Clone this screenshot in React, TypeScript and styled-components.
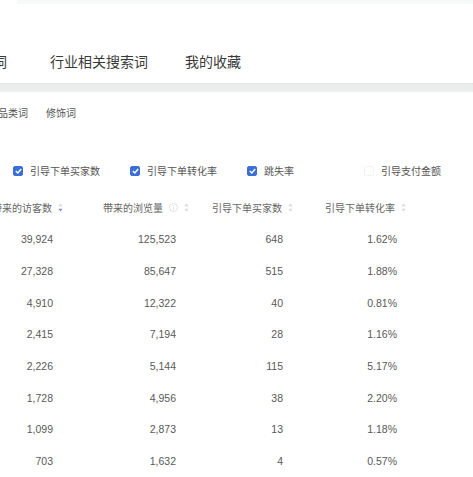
import React from "react";
import styled, { createGlobalStyle } from "styled-components";

const Global = createGlobalStyle`
  html, body { margin: 0; padding: 0; background: #fff; overflow: hidden; }
  body { font-family: "Liberation Sans", "Noto Sans CJK SC", sans-serif; }
`;

const Page = styled.div`
  width: 473px;
  height: 477px;
  overflow: hidden;
  display: flex;
  flex-direction: column;
`;

const TopStrip = styled.div`
  height: 4px;
  margin-left: 17px;
  background: #f7f8f8;
`;

const TabBar = styled.div`
  height: 79px;
  display: flex;
  align-items: flex-end;
  gap: 37px;
  padding-bottom: 12px;
  box-sizing: border-box;
  margin-left: -35px;
`;

const Tab = styled.div<{ $extra?: number }>`
  font-size: 14px;
  line-height: 18px;
  color: #3a3a3a;
  white-space: nowrap;
  margin-right: ${(p) => p.$extra ?? 0}px;
`;

const Band = styled.div`
  height: 9px;
  background: linear-gradient(#e2e4e4 0, #eaecec 2px, #eef0f0 100%);
`;

const SubTabs = styled.div`
  height: 42px;
  display: flex;
  align-items: center;
  gap: 18px;
  margin-left: -2px;
`;

const SubTab = styled.div`
  font-size: 10px;
  color: #555;
  white-space: nowrap;
`;

const Checks = styled.div`
  margin-top: 22px;
  height: 30px;
  display: grid;
  grid-template-columns: repeat(4, 117px);
  align-items: center;
  padding-left: 13px;
`;

const CheckItem = styled.label`
  display: flex;
  align-items: center;
  gap: 7px;
  font-size: 10px;
  color: #555;
  white-space: nowrap;
`;

const Box = styled.span<{ $on: boolean }>`
  width: 10px;
  height: 10px;
  box-sizing: border-box;
  border-radius: 2px;
  display: inline-flex;
  align-items: center;
  justify-content: center;
  background: ${(p) => (p.$on ? "#3c6fd6" : "#fff")};
  border: 1px solid ${(p) => (p.$on ? "#3c6fd6" : "#f3f3f3")};
`;

const Table = styled.div`
  margin-top: 6px;
  margin-left: -20px;
  display: flex;
  flex-direction: column;
`;

const Row = styled.div<{ $h: number }>`
  display: grid;
  grid-template-columns: 100px 115px 110px 115px 1fr;
  height: ${(p) => p.$h}px;
  align-items: center;
`;

const HeadCell = styled.div<{ $pl: number }>`
  display: flex;
  align-items: center;
  gap: 6px;
  padding-left: ${(p) => p.$pl}px;
  font-size: 10px;
  color: #666;
  white-space: nowrap;
`;

const Cell = styled.div<{ $pr: number }>`
  text-align: right;
  padding-right: ${(p) => p.$pr}px;
  font-size: 10.5px;
  color: #595959;
  white-space: nowrap;
`;

const Check = () => (
  <svg width="7" height="6" viewBox="0 0 7 6">
    <path d="M0.8 3 L2.8 5 L6.2 1" fill="none" stroke="#fff" strokeWidth="1.4" />
  </svg>
);

const Sort = ({ active }: { active?: boolean }) => (
  <svg width="5" height="9" viewBox="0 0 5 9">
    <path d="M2.5 0.5 L4.6 3.3 L0.4 3.3 Z" fill="#d9d9d9" />
    <path d="M2.5 8.5 L4.6 5.7 L0.4 5.7 Z" fill={active ? "#7d8fb3" : "#d9d9d9"} />
  </svg>
);

const Info = () => (
  <svg width="9" height="9" viewBox="0 0 9 9">
    <circle cx="4.5" cy="4.5" r="4" fill="none" stroke="#dcdcdc" strokeWidth="0.9" />
    <rect x="4.05" y="3.8" width="0.9" height="3" fill="#dcdcdc" />
    <rect x="4.05" y="2.1" width="0.9" height="0.9" fill="#dcdcdc" />
  </svg>
);

const cols = [
  { title: "带来的访客数", pl: 12, pr: 27, info: false, active: true },
  { title: "带来的浏览量", pl: 23, pr: 19, info: true, active: false },
  { title: "引导下单买家数", pl: 17, pr: 22, info: false, active: false },
  { title: "引导下单转化率", pl: 20, pr: 23, info: false, active: false },
];

const data = [
  ["39,924", "125,523", "648", "1.62%"],
  ["27,328", "85,647", "515", "1.88%"],
  ["4,910", "12,322", "40", "0.81%"],
  ["2,415", "7,194", "28", "1.16%"],
  ["2,226", "5,144", "115", "5.17%"],
  ["1,728", "4,956", "38", "2.20%"],
  ["1,099", "2,873", "13", "1.18%"],
  ["703", "1,632", "4", "0.57%"],
];

const checks = [
  { label: "引导下单买家数", on: true },
  { label: "引导下单转化率", on: true },
  { label: "跳失率", on: true },
  { label: "引导支付金额", on: false },
];

export default function App() {
  return (
    <Page>
      <Global />
      <TopStrip />
      <TabBar>
        <Tab $extra={6}>搜索词</Tab>
        <Tab>行业相关搜索词</Tab>
        <Tab>我的收藏</Tab>
      </TabBar>
      <Band />
      <SubTabs>
        <SubTab>品类词</SubTab>
        <SubTab>修饰词</SubTab>
      </SubTabs>
      <Checks>
        {checks.map((c) => (
          <CheckItem key={c.label}>
            <Box $on={c.on}>{c.on && <Check />}</Box>
            <span>{c.label}</span>
          </CheckItem>
        ))}
      </Checks>
      <Table>
        <Row $h={32}>
          {cols.map((c) => (
            <HeadCell key={c.title} $pl={c.pl}>
              <span>{c.title}</span>
              {c.info && <Info />}
              <Sort active={c.active} />
            </HeadCell>
          ))}
          <div />
        </Row>
        {data.map((r, i) => (
          <Row key={i} $h={31.7}>
            {r.map((v, j) => (
              <Cell key={j} $pr={cols[j].pr}>
                {v}
              </Cell>
            ))}
            <div />
          </Row>
        ))}
      </Table>
    </Page>
  );
}
